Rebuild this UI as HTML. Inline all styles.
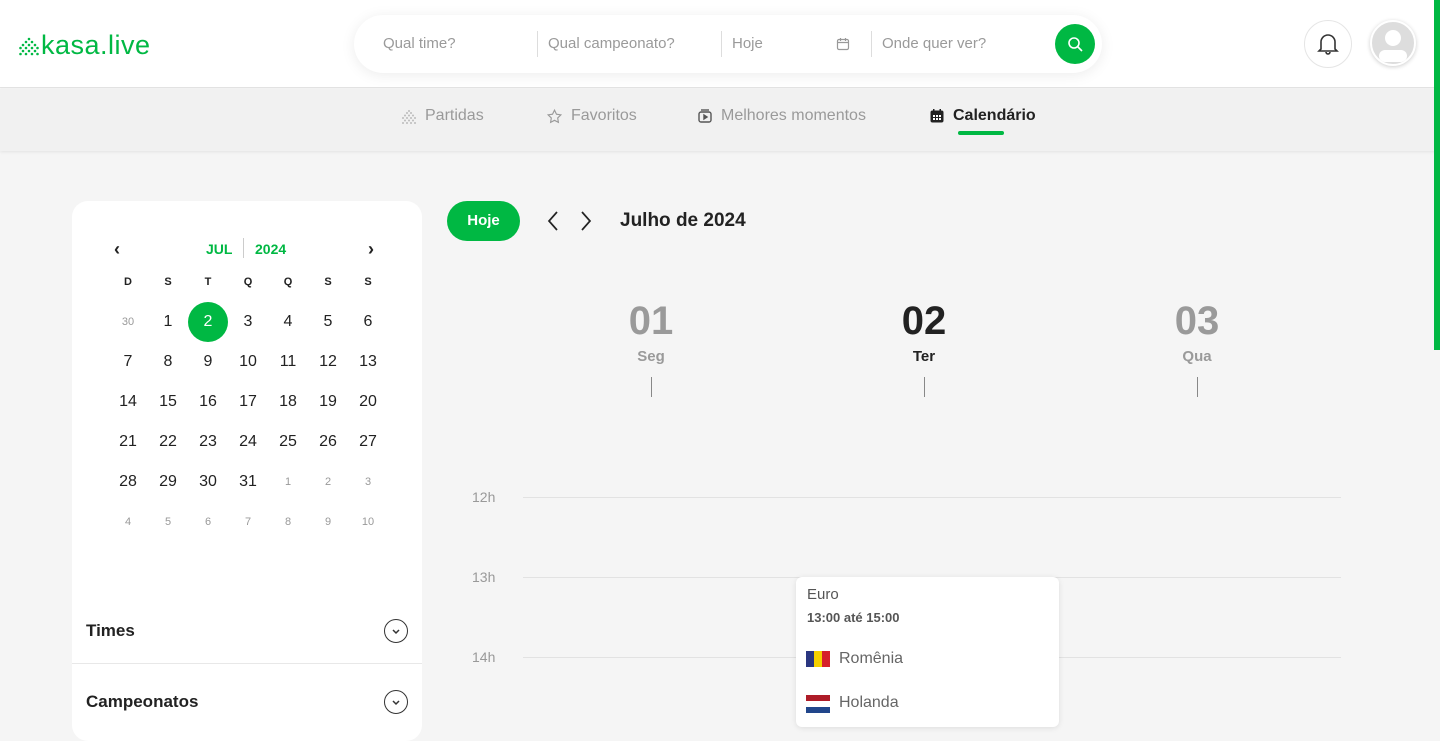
<!DOCTYPE html><html><head><meta charset="utf-8"><style>
*{box-sizing:border-box;margin:0;padding:0}
body{width:1440px;height:713px;overflow:hidden;background:#f5f5f5;font-family:"Liberation Sans",Roboto,sans-serif;position:relative;color:#222}
.a{position:absolute}
.hdr{left:0;top:0;width:1440px;height:88px;background:#fff;border-bottom:1px solid #e3e3e3}
.nav{left:0;top:89px;width:1440px;height:62px;background:#f1f1f1;box-shadow:0 1px 3px rgba(0,0,0,.08)}
.ni{top:107px;font-size:16px;color:#9a9a9a;display:flex;align-items:center;gap:8px}
.srch{left:354px;top:15px;width:748px;height:58px;background:#fff;border-radius:29px;box-shadow:0 2px 14px rgba(0,0,0,.08)}
.sp{top:35px;font-size:15px;color:#9a9a9a}
.sep{top:31px;width:1px;height:26px;background:#ddd}
.card{left:72px;top:201px;width:350px;height:540px;background:#fff;border-radius:16px}
.c{position:absolute;width:40px;text-align:center;font-size:16px;color:#222;line-height:20px}
.c.s{font-size:11px;color:#999}
.c.h{font-size:11px;font-weight:bold}
.hl{left:523px;width:818px;height:1px;background:#e2e2e2}
.hlab{left:472px;font-size:14px;color:#999}
.day{width:200px;text-align:center}
</style></head><body>
<div class="a hdr"></div>
<div class="a" style="left:19px;top:30px;display:flex;align-items:center;gap:2px">
<svg width="20" height="20" viewBox="0 0 20 20"><g fill="#00b843"><circle cx="10" cy="3" r="1.3"/><circle cx="7" cy="6" r="1.3"/><circle cx="13" cy="6" r="1.3"/><circle cx="4" cy="9" r="1.3"/><circle cx="10" cy="9" r="1.3"/><circle cx="16" cy="9" r="1.3"/><circle cx="1.5" cy="12" r="1.3"/><circle cx="7" cy="12" r="1.3"/><circle cx="13" cy="12" r="1.3"/><circle cx="18.5" cy="12" r="1.3"/><circle cx="4" cy="15" r="1.3"/><circle cx="10" cy="15" r="1.3"/><circle cx="16" cy="15" r="1.3"/><circle cx="1.5" cy="18" r="1.3"/><circle cx="7" cy="18" r="1.3"/><circle cx="13" cy="18" r="1.3"/><circle cx="18.5" cy="18" r="1.3"/></g></svg>
<span style="font-size:27px;color:#00b843;letter-spacing:.5px">kasa.live</span></div>
<div class="a srch"></div>
<div class="a sp" style="left:383px">Qual time?</div>
<div class="a sep" style="left:537px"></div>
<div class="a sp" style="left:548px">Qual campeonato?</div>
<div class="a sep" style="left:721px"></div>
<div class="a sp" style="left:732px">Hoje</div>
<svg class="a" style="left:836px;top:37px" width="14" height="14" viewBox="0 0 14 14" fill="none" stroke="#999" stroke-width="1.2"><rect x="1.5" y="2.5" width="11" height="10" rx="1.5"/><path d="M1.5 5.5h11M4.5 1v3M9.5 1v3"/></svg>
<div class="a sep" style="left:871px"></div>
<div class="a sp" style="left:882px">Onde quer ver?</div>
<div class="a" style="left:1055px;top:24px;width:40px;height:40px;border-radius:50%;background:#00b843"></div>
<svg class="a" style="left:1066px;top:35px" width="18" height="18" viewBox="0 0 18 18" fill="none" stroke="#fff" stroke-width="1.6"><circle cx="8" cy="8" r="5"/><path d="M12 12l4 4"/></svg>
<div class="a" style="left:1304px;top:20px;width:48px;height:48px;border-radius:50%;border:1px solid #e5e5e5;background:#fff"></div>
<svg class="a" style="left:1316px;top:31px" width="24" height="26" viewBox="0 0 24 26" fill="none" stroke="#333" stroke-width="1.6"><path d="M5 18V11a7 7 0 0114 0v7l2 2H3z"/><path d="M10 21a2 2 0 004 0"/></svg>
<div class="a" style="left:1370px;top:20px;width:46px;height:46px;border-radius:50%;background:#ddd;border:2px solid #fff;box-shadow:0 1px 4px rgba(0,0,0,.2);overflow:hidden">
<div class="a" style="left:13px;top:8px;width:16px;height:16px;border-radius:50%;background:#fff"></div>
<div class="a" style="left:7px;top:28px;width:28px;height:12px;border-radius:6px;background:#fff"></div></div>
<div class="a nav"></div>
<div class="a" style="left:1434px;top:0;width:6px;height:350px;background:#00b843;z-index:5"></div>
<div class="a ni" style="left:401px"><svg width="16" height="16" viewBox="0 0 16 16" fill="#bbb"><circle cx="8" cy="3" r="1"/><circle cx="6" cy="5" r="1"/><circle cx="10" cy="5" r="1"/><circle cx="4" cy="7.5" r="1"/><circle cx="8" cy="7.5" r="1"/><circle cx="12" cy="7.5" r="1"/><circle cx="2" cy="10" r="1"/><circle cx="6" cy="10" r="1"/><circle cx="10" cy="10" r="1"/><circle cx="14" cy="10" r="1"/><circle cx="4" cy="12.5" r="1"/><circle cx="8" cy="12.5" r="1"/><circle cx="12" cy="12.5" r="1"/><circle cx="2" cy="15" r="1"/><circle cx="6" cy="15" r="1"/><circle cx="10" cy="15" r="1"/><circle cx="14" cy="15" r="1"/></svg>Partidas</div>
<div class="a ni" style="left:546px"><svg width="17" height="17" viewBox="0 0 24 24" fill="none" stroke="#999" stroke-width="1.6"><path d="M12 3l2.8 5.8 6.2.9-4.5 4.4 1 6.2L12 17.4l-5.5 2.9 1-6.2L3 9.7l6.2-.9z"/></svg>Favoritos</div>
<div class="a ni" style="left:697px"><svg width="16" height="16" viewBox="0 0 16 16" fill="none" stroke="#555" stroke-width="1.4"><rect x="2" y="4" width="12" height="10" rx="2"/><path d="M4 2h8"/><path d="M7 7v4l3-2z" fill="#555"/></svg>Melhores momentos</div>
<div class="a ni" style="left:929px;color:#222;font-weight:bold"><svg width="16" height="16" viewBox="0 0 16 16"><rect x="1.5" y="2.5" width="13" height="12" rx="2" fill="#222"/><rect x="4" y="1" width="1.5" height="3" fill="#222"/><rect x="10.5" y="1" width="1.5" height="3" fill="#222"/><g fill="#fff"><rect x="4" y="7" width="2" height="2"/><rect x="7" y="7" width="2" height="2"/><rect x="10" y="7" width="2" height="2"/><rect x="4" y="10" width="2" height="2"/><rect x="7" y="10" width="2" height="2"/><rect x="10" y="10" width="2" height="2"/></g></svg>Calendário</div>
<div class="a" style="left:958px;top:131px;width:46px;height:4px;border-radius:2px;background:#00b843"></div>

<div class="a card">
<div class="a" style="left:42px;top:38px;font-size:18px;font-weight:bold">‹</div>
<div class="a" style="left:296px;top:38px;font-size:18px;font-weight:bold">›</div>
<div class="a" style="left:134px;top:40px;font-size:14px;font-weight:bold;color:#00b843">JUL</div>
<div class="a" style="left:171px;top:37px;width:1px;height:20px;background:#ccc"></div>
<div class="a" style="left:183px;top:40px;font-size:14px;font-weight:bold;color:#00b843">2024</div>
<div class="a" style="left:116px;top:101px;width:40px;height:40px;border-radius:50%;background:#00b843"></div>
<div id="g"></div>
<div class="a" style="left:14px;top:420px;font-size:17px;font-weight:bold">Times</div>
<div class="a" style="left:312px;top:418px;width:24px;height:24px;border:1.5px solid #333;border-radius:50%"></div>
<svg class="a" style="left:318px;top:424px" width="12" height="12" viewBox="0 0 12 12" fill="none" stroke="#333" stroke-width="1.5"><path d="M3 5l3 3 3-3"/></svg>
<div class="a" style="left:0;top:462px;width:350px;height:1px;background:#e8e8e8"></div>
<div class="a" style="left:14px;top:491px;font-size:17px;font-weight:bold">Campeonatos</div>
<div class="a" style="left:312px;top:489px;width:24px;height:24px;border:1.5px solid #333;border-radius:50%"></div>
<svg class="a" style="left:318px;top:495px" width="12" height="12" viewBox="0 0 12 12" fill="none" stroke="#333" stroke-width="1.5"><path d="M3 5l3 3 3-3"/></svg>
</div>
<script>
var d=["D","S","T","Q","Q","S","S"],h="";
for(var i=0;i<7;i++)h+='<div class="c h" style="left:'+(36+i*40)+'px;top:71px">'+d[i]+'</div>';
var n=[];n.push([30,1]);for(var k=1;k<=31;k++)n.push([k,0]);for(k=1;k<=10;k++)n.push([k,1]);
for(i=0;i<n.length;i++){var r=Math.floor(i/7),c=i%7;var st=n[i][0]==2&&!n[i][1]?'color:#fff;':'';
h+='<div class="c'+(n[i][1]?' s':'')+'" style="'+st+'left:'+(36+c*40)+'px;top:'+(111+r*40)+'px">'+n[i][0]+'</div>';}
document.getElementById("g").outerHTML=h;
</script>

<div class="a" style="left:447px;top:201px;width:73px;height:40px;border-radius:20px;background:#00b843;color:#fff;font-weight:bold;font-size:15px;text-align:center;line-height:40px">Hoje</div>
<svg class="a" style="left:544px;top:210px" width="52" height="22" viewBox="0 0 52 22" fill="none" stroke="#222" stroke-width="1.7"><path d="M13 2l-8 9 8 9M38 2l8 9-8 9"/></svg>
<div class="a" style="left:620px;top:210px;font-size:19px;font-weight:bold">Julho de 2024</div>

<div class="a day" style="left:551px;top:299px;color:#9a9a9a"><div style="font-size:40px;font-weight:bold">01</div><div style="font-size:15px;font-weight:bold;margin-top:4px">Seg</div></div>
<div class="a day" style="left:824px;top:299px;color:#222"><div style="font-size:40px;font-weight:bold">02</div><div style="font-size:15px;font-weight:bold;margin-top:4px">Ter</div></div>
<div class="a day" style="left:1097px;top:299px;color:#9a9a9a"><div style="font-size:40px;font-weight:bold">03</div><div style="font-size:15px;font-weight:bold;margin-top:4px">Qua</div></div>
<div class="a" style="left:651px;top:377px;width:1px;height:20px;background:#888"></div>
<div class="a" style="left:924px;top:377px;width:1px;height:20px;background:#888"></div>
<div class="a" style="left:1197px;top:377px;width:1px;height:20px;background:#888"></div>

<div class="a hl" style="top:497px"></div><div class="a hlab" style="top:489px">12h</div>
<div class="a hl" style="top:577px"></div><div class="a hlab" style="top:569px">13h</div>
<div class="a hl" style="top:657px"></div><div class="a hlab" style="top:649px">14h</div>

<div class="a" style="left:796px;top:577px;width:263px;height:150px;background:#fff;border-radius:6px;box-shadow:0 1px 6px rgba(0,0,0,.1)">
<div class="a" style="left:11px;top:9px;font-size:15px;color:#555">Euro</div>
<div class="a" style="left:11px;top:33px;font-size:13px;font-weight:bold;color:#555">13:00 até 15:00</div>
<div class="a" style="left:10px;top:74px;width:24px;height:16px;display:flex"><div style="flex:1;background:#2a3680"></div><div style="flex:1;background:#f5d000"></div><div style="flex:1;background:#d6202a"></div></div>
<div class="a" style="left:43px;top:73px;font-size:16px;color:#666">Romênia</div>
<div class="a" style="left:10px;top:118px;width:24px;height:18px;background:linear-gradient(#ae1c28 0 33%,#fff 33% 66%,#21468b 66%)"></div>
<div class="a" style="left:43px;top:117px;font-size:16px;color:#666">Holanda</div>
</div>
</body></html>
